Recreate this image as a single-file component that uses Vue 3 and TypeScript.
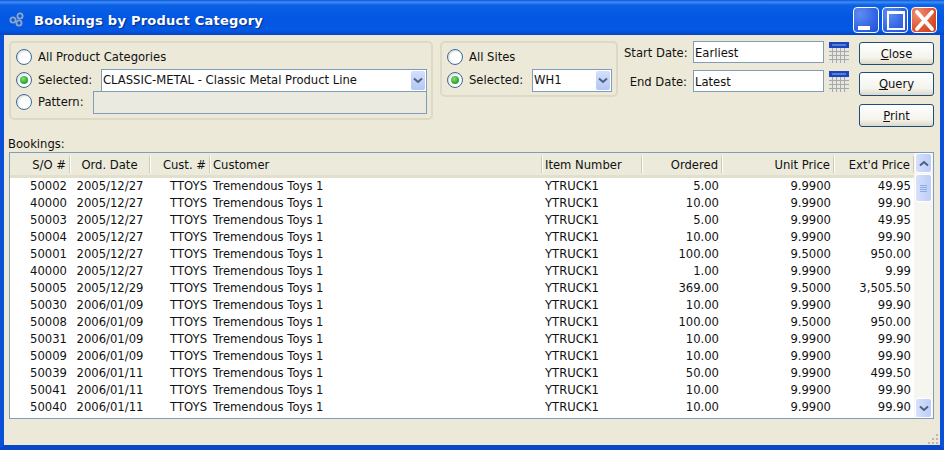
<script setup lang="ts">
interface Row { so: string; date: string; ordered: string; price: string; ext: string }
const raw: string[][] = [
  ['50002', '2005/12/27', '5.00', '9.9900', '49.95'],
  ['40000', '2005/12/27', '10.00', '9.9900', '99.90'],
  ['50003', '2005/12/27', '5.00', '9.9900', '49.95'],
  ['50004', '2005/12/27', '10.00', '9.9900', '99.90'],
  ['50001', '2005/12/27', '100.00', '9.5000', '950.00'],
  ['40000', '2005/12/27', '1.00', '9.9900', '9.99'],
  ['50005', '2005/12/29', '369.00', '9.5000', '3,505.50'],
  ['50030', '2006/01/09', '10.00', '9.9900', '99.90'],
  ['50008', '2006/01/09', '100.00', '9.5000', '950.00'],
  ['50031', '2006/01/09', '10.00', '9.9900', '99.90'],
  ['50009', '2006/01/09', '10.00', '9.9900', '99.90'],
  ['50039', '2006/01/11', '50.00', '9.9900', '499.50'],
  ['50041', '2006/01/11', '10.00', '9.9900', '99.90'],
  ['50040', '2006/01/11', '10.00', '9.9900', '99.90'],
]
const rows: Row[] = raw.map(([so, date, ordered, price, ext]) => ({ so, date, ordered, price, ext }))
const cols = [
  { label: 'S/O #', cls: 'r' },
  { label: 'Ord. Date', cls: 'c' },
  { label: 'Cust. #', cls: 'r' },
  { label: 'Customer', cls: 'l' },
  { label: 'Item Number', cls: 'l' },
  { label: 'Ordered', cls: 'r' },
  { label: 'Unit Price', cls: 'r' },
  { label: "Ext'd Price", cls: 'r' },
]
</script>

<template>
  <div class="window">
    <header class="titlebar">
      <svg class="appicon" width="20" height="16" viewBox="0 0 20 16">
        <g fill="none" stroke="#8fa6c8" stroke-width="1.8">
          <circle cx="6" cy="8" r="2.6" />
          <circle cx="13" cy="4" r="2.6" />
          <circle cx="12" cy="11" r="2.6" />
        </g>
      </svg>
      <span class="title">Bookings by Product Category</span>
      <div class="winbtns">
        <div class="wb blue">
          <svg width="24" height="24" viewBox="0 0 24 24"><rect x="4" y="18" width="12" height="4" fill="#fff" /></svg>
        </div>
        <div class="wb blue">
          <svg width="24" height="24" viewBox="0 0 24 24"><rect x="5" y="4" width="16" height="17" fill="none" stroke="#fff" stroke-width="2" /><rect x="4" y="3" width="18" height="3" fill="#fff" /></svg>
        </div>
        <div class="wb red">
          <svg width="24" height="24" viewBox="0 0 24 24"><path d="M5 4 L20 21 M20 4 L5 21" stroke="#fff" stroke-width="3.8" stroke-linecap="round" /></svg>
        </div>
      </div>
    </header>

    <main class="content">
      <section class="top">
        <div class="group g1">
          <div class="rline">
            <span class="radio"></span><span class="lbl">All Product Categories</span>
          </div>
          <div class="rline sel">
            <span class="radio on"></span><span class="lbl w63">Selected:</span>
            <div class="combo wide">
              <span class="val">CLASSIC-METAL - Classic Metal Product Line</span>
              <span class="drop"><svg width="10" height="7" viewBox="0 0 10 7"><path d="M1 1.5 L5 5 L9 1.5" fill="none" stroke="#4d6185" stroke-width="2" /></svg></span>
            </div>
          </div>
          <div class="rline pat">
            <span class="radio"></span><span class="lbl w55">Pattern:</span>
            <div class="patinput"></div>
          </div>
        </div>

        <div class="group g2">
          <div class="rline">
            <span class="radio"></span><span class="lbl">All Sites</span>
          </div>
          <div class="rline sel">
            <span class="radio on"></span><span class="lbl w63">Selected:</span>
            <div class="combo site">
              <span class="val">WH1</span>
              <span class="drop"><svg width="10" height="7" viewBox="0 0 10 7"><path d="M1 1.5 L5 5 L9 1.5" fill="none" stroke="#4d6185" stroke-width="2" /></svg></span>
            </div>
          </div>
        </div>

        <div class="dates">
          <div class="dline">
            <span class="dlabel">Start Date:</span>
            <div class="dinput">Earliest</div>
            <svg class="cal" width="20" height="21" viewBox="0 0 20 21">
              <rect x="0" y="0" width="20" height="21" fill="#e6e6e2" />
              <rect x="0" y="0" width="20" height="6" fill="#1c44c0" />
              <rect x="3" y="2" width="14" height="2" fill="#4f86c6" />
              <path d="M0 9.5H20M0 13.5H20M0 17.5H20M3.5 6V21M7.5 6V21M11.5 6V21M15.5 6V21" stroke="#a8a8a4" stroke-width="1" />
            </svg>
          </div>
          <div class="dline">
            <span class="dlabel">End Date:</span>
            <div class="dinput">Latest</div>
            <svg class="cal" width="20" height="21" viewBox="0 0 20 21">
              <rect x="0" y="0" width="20" height="21" fill="#e6e6e2" />
              <rect x="0" y="0" width="20" height="6" fill="#1c44c0" />
              <rect x="3" y="2" width="14" height="2" fill="#4f86c6" />
              <path d="M0 9.5H20M0 13.5H20M0 17.5H20M3.5 6V21M7.5 6V21M11.5 6V21M15.5 6V21" stroke="#a8a8a4" stroke-width="1" />
            </svg>
          </div>
        </div>

        <div class="actions">
          <button class="btn"><u>C</u>lose</button>
          <button class="btn b2"><u>Q</u>uery</button>
          <button class="btn b3"><u>P</u>rint</button>
        </div>
      </section>

      <div class="tlabel">Bookings:</div>

      <section class="table">
        <div class="tmain">
          <div class="thead">
            <div v-for="c in cols" :key="c.label" class="th" :class="c.cls">{{ c.label }}</div>
          </div>
          <div class="tbody">
            <div v-for="(r, i) in rows" :key="i" class="tr">
              <div class="td r">{{ r.so }}</div>
              <div class="td c">{{ r.date }}</div>
              <div class="td r">TTOYS</div>
              <div class="td l">Tremendous Toys 1</div>
              <div class="td l">YTRUCK1</div>
              <div class="td r">{{ r.ordered }}</div>
              <div class="td r">{{ r.price }}</div>
              <div class="td r">{{ r.ext }}</div>
            </div>
          </div>
        </div>
        <div class="scroll">
          <div class="sb">
            <svg width="10" height="7" viewBox="0 0 10 7"><path d="M1 5.5 L5 2 L9 5.5" fill="none" stroke="#4d6185" stroke-width="2" /></svg>
          </div>
          <div class="thumb"><i></i><i></i><i></i><i></i></div>
          <div class="track"></div>
          <div class="sb">
            <svg width="10" height="7" viewBox="0 0 10 7"><path d="M1 1.5 L5 5 L9 1.5" fill="none" stroke="#4d6185" stroke-width="2" /></svg>
          </div>
        </div>
      </section>

      <footer class="foot">
        <svg width="12" height="12" viewBox="0 0 12 12" class="grip">
          <g fill="#bdb9a3">
            <rect x="9" y="1" width="2" height="2" /><rect x="5" y="5" width="2" height="2" /><rect x="9" y="5" width="2" height="2" />
            <rect x="1" y="9" width="2" height="2" /><rect x="5" y="9" width="2" height="2" /><rect x="9" y="9" width="2" height="2" />
          </g>
        </svg>
      </footer>
    </main>
  </div>
</template>

<style>
html, body { margin: 0; padding: 0; background: #ece9d8; }
</style>

<style scoped>
.window {
  width: 944px;
  height: 450px;
  box-sizing: border-box;
  display: flex;
  flex-direction: column;
  background: #ece9d8;
  font-family: "DejaVu Sans", sans-serif;
  font-size: 11.6px;
  color: #111;
  overflow: hidden;
}
.titlebar {
  height: 35px;
  flex: none;
  display: flex;
  align-items: center;
  box-sizing: border-box;
  padding: 5px 7px 0 7px;
  background: linear-gradient(180deg, #0a57d8 0%, #3f8df5 6%, #0c62e6 14%, #0357e2 50%, #0358e4 86%, #0246c4 100%);
}
.appicon { flex: none; margin-right: 7px; }
.title {
  color: #fff;
  font-weight: bold;
  font-size: 13px;
  letter-spacing: 0.24px;
  text-shadow: 1px 1px 1px #0a2f8a;
}
.winbtns { margin-left: auto; display: flex; gap: 3px; }
.wb {
  width: 26px;
  height: 26px;
  box-sizing: border-box;
  border: 1px solid #fff;
  border-radius: 4px;
  display: flex;
  align-items: center;
  justify-content: center;
}
.wb.blue { background: radial-gradient(circle at 25% 25%, #5f8cf2, #2d5fe0 70%, #2450c8); }
.wb.red { background: radial-gradient(circle at 25% 25%, #ef9070, #de5430 60%, #c23c16); }
.content {
  flex: 1;
  min-height: 0;
  display: flex;
  flex-direction: column;
  border-left: 4px solid #0a50d8;
  border-right: 4px solid #0a50d8;
  border-bottom: 5px solid #0a47c8;
  padding: 6px 6px 0 5px;
  box-sizing: border-box;
}
.top { display: flex; align-items: flex-start; height: 96px; flex: none; }
.group {
  box-sizing: border-box;
  border: 2px solid #dcd9c6;
  border-radius: 5px;
  flex: none;
}
.g1 { width: 424px; height: 79px; padding: 6px 4px 0 5px; }
.g2 { width: 178px; height: 56px; margin-left: 7px; padding: 6px 4px 0 5px; }
.rline { display: flex; align-items: center; height: 16px; white-space: nowrap; }
.rline.sel { margin-top: 7px; }
.rline.pat { margin-top: 6px; }
.radio {
  width: 16px;
  height: 16px;
  box-sizing: border-box;
  border: 1px solid #3c6a96;
  border-radius: 50%;
  background: #fff;
  flex: none;
  margin-right: 6px;
  position: relative;
  box-shadow: inset 1px 1px 2px #d8d8d0;
}
.radio.on::after {
  content: "";
  position: absolute;
  left: 3px;
  top: 3px;
  width: 8px;
  height: 8px;
  border-radius: 50%;
  background: radial-gradient(circle at 40% 35%, #7fe07f, #20a020 75%);
}
.lbl { line-height: 17px; padding-top: 1px; }
.w63 { width: 63px; flex: none; }
.w55 { width: 55px; flex: none; }
.combo {
  box-sizing: border-box;
  height: 23px;
  border: 1px solid #7f9db9;
  background: #fff;
  display: flex;
  align-items: center;
  position: relative;
  flex: none;
}
.combo .val { padding-left: 1px; }
.combo.wide { width: 326px; }
.combo.site { width: 80px; }
.drop {
  position: absolute;
  right: 1px;
  top: 1px;
  bottom: 1px;
  width: 14px;
  border-radius: 2px;
  background: linear-gradient(180deg, #d4dffb, #b4c6f4);
  display: flex;
  align-items: center;
  justify-content: center;
}
.patinput {
  box-sizing: border-box;
  width: 334px;
  height: 23px;
  border: 1px solid #7f9db9;
  background: #ebeae1;
  flex: none;
}
.dates { margin-left: 6px; width: 231px; flex: none; }
.dline { display: flex; align-items: center; height: 22px; margin-bottom: 7px; }
.dlabel { width: 63px; text-align: right; flex: none; margin-right: 6px; white-space: nowrap; padding-top: 1px; }
.dinput {
  box-sizing: border-box;
  width: 131px;
  height: 22px;
  line-height: 22px;
  border: 1px solid #7f9db9;
  background: #fff;
  padding-left: 1px;
  flex: none;
}
.cal { margin-left: 5px; flex: none; }
.actions { margin-left: auto; display: flex; flex-direction: column; width: 75px; flex: none; padding-top: 1px; }
.btn {
  box-sizing: border-box;
  width: 75px;
  height: 23px;
  padding: 0;
  border: 1px solid #1f4d7a;
  border-radius: 3px;
  background: linear-gradient(180deg, #fff, #f4f3ec 70%, #dcd8c8);
  font: inherit;
  color: #111;
}
.b2 { height: 24px; margin-top: 7px; }
.b3 { margin-top: 8px; }
.tlabel { height: 15px; line-height: 15px; flex: none; margin-left: -1px; }
.table {
  height: 267px;
  flex: none;
  box-sizing: border-box;
  border: 1px solid #7f9db9;
  display: flex;
  background: #fff;
}
.tmain { width: 904px; flex: none; display: flex; flex-direction: column; }
.thead, .tr {
  display: grid;
  grid-template-columns: 60px 80px 60px 332px 100px 80px 112px 80px;
}
.thead {
  height: 25px;
  flex: none;
  box-sizing: border-box;
  background: #ebeadb;
  border-bottom: 3px solid #e2dfcc;
  align-items: center;
}
.th {
  height: 17px;
  line-height: 19px;
  padding: 0 3px;
  border-right: 1px solid #cfccb6;
  box-shadow: 1px 0 0 #fff;
  box-sizing: border-box;
  white-space: nowrap;
}
.tr { height: 17px; line-height: 17px; }
.td { padding: 0 3px; white-space: nowrap; }
.r { text-align: right; }
.c { text-align: center; }
.l { text-align: left; }
.scroll {
  flex: 1;
  display: flex;
  flex-direction: column;
  background: #f6f5ef;
}
.sb, .thumb {
  box-sizing: border-box;
  margin: 0 1px;
  border: 1px solid #fff;
  border-radius: 3px;
  background: linear-gradient(90deg, #d6e0fb, #bccdf6);
  display: flex;
  align-items: center;
  justify-content: center;
  flex: none;
}
.sb { height: 20px; }
.thumb { height: 28px; margin-top: 1px; flex-direction: column; gap: 1px; }
.thumb i { display: block; width: 7px; height: 1px; background: #8ea9e8; }
.track { flex: 1; }
.foot { flex: 1; position: relative; }
.grip { position: absolute; right: -5px; bottom: 0; }
</style>
